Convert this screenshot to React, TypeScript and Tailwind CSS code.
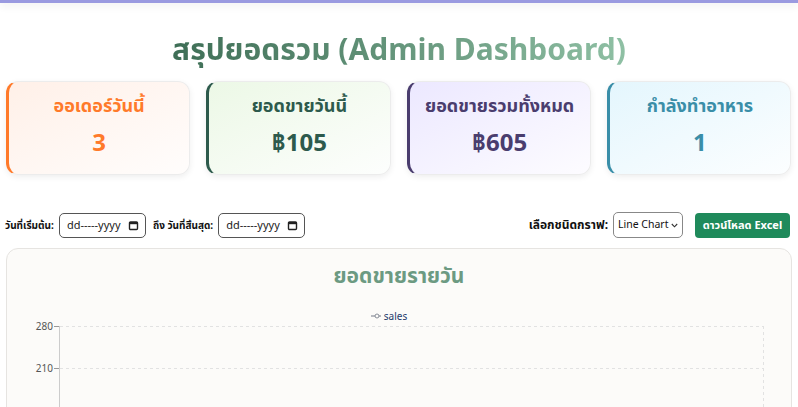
import React from 'react';

const cards = [
    { title: 'ออเดอร์วันนี้', value: '3', text: 'text-[#ff7a2a]', edge: 'border-l-[#ff7a2a]', bg: 'bg-gradient-to-br from-[#fff0e8] to-[#fffdfc]' },
    { title: 'ยอดขายวันนี้', value: '฿105', text: 'text-[#2d5a4c]', edge: 'border-l-[#2d5a4c]', bg: 'bg-gradient-to-br from-[#ecf8e6] to-[#fdfefd]' },
    { title: 'ยอดขายรวมทั้งหมด', value: '฿605', text: 'text-[#4a3d6e]', edge: 'border-l-[#4a3d6e]', bg: 'bg-gradient-to-br from-[#ece8ff] to-[#fdfcff]' },
    { title: 'กำลังทำอาหาร', value: '1', text: 'text-[#3a8ea8]', edge: 'border-l-[#3a8ea8]', bg: 'bg-gradient-to-br from-[#e4f6fd] to-[#fcfeff]' },
];

const DateBox = () => (
    <div className="flex items-center justify-between w-[87px] h-[25px] border border-[#555] rounded-[5px] pl-[7px] pr-[6px] bg-white">
        <span className="text-[11px] text-[#222] whitespace-nowrap">dd-----yyyy</span>
        <svg width="11" height="11" viewBox="0 0 11 11">
            <rect x="1.5" y="2" width="8" height="7.5" rx="1" fill="none" stroke="#222" strokeWidth="1.4" />
            <rect x="1.5" y="2" width="8" height="2.2" fill="#222" />
        </svg>
    </div>
);

const App = () => {
    return (
        <div className="w-[798px] h-[407px] overflow-hidden bg-white" style={{ fontFamily: '"Noto Sans", "Noto Sans Thai", "Liberation Sans", sans-serif' }}>
            {/* top bar */}
            <div className="h-[3px] bg-[#9a9ae0] shadow-[0_2px_8px_rgba(0,0,0,0.12)]" />

            <main className="px-[6px]">
                <h1 className="mt-[27px] text-center text-[30px] leading-[37px] font-bold">
                    <span className="bg-gradient-to-r from-[#3e6e56] to-[#8fc0a4] bg-clip-text text-transparent">
                        สรุปยอดรวม (Admin Dashboard)
                    </span>
                </h1>

                {/* summary cards */}
                <div className="mt-[14px] grid grid-cols-4 gap-[16px] pr-[1px]">
                    {cards.map((c) => (
                        <div
                            key={c.title}
                            className={`h-[94px] rounded-[12px] border border-[#ececec] border-l-[3px] ${c.edge} ${c.bg} shadow-[0_2px_6px_rgba(0,0,0,0.07)] flex flex-col items-center pt-[10px]`}
                        >
                            <div className={`text-[18px] leading-[26px] font-bold ${c.text}`}>{c.title}</div>
                            <div className={`mt-[9px] text-[24px] leading-[30px] font-bold ${c.text}`}>{c.value}</div>
                        </div>
                    ))}
                </div>

                {/* filters */}
                <div className="mt-[37px] flex items-center justify-between pr-[2px]">
                    <div className="flex items-center -ml-[1px]">
                        <span className="text-[10px] font-bold text-[#111] whitespace-nowrap">วันที่เริ่มต้น:</span>
                        <div className="ml-[5px]"><DateBox /></div>
                        <span className="ml-[7px] text-[10px] font-bold text-[#111] whitespace-nowrap">ถึง วันที่สิ้นสุด:</span>
                        <div className="ml-[5px]"><DateBox /></div>
                    </div>
                    <div className="flex items-center">
                        <span className="text-[12px] font-bold text-[#111] whitespace-nowrap">เลือกชนิดกราฟ:</span>
                        <div className="ml-[5px] flex items-center justify-between w-[70px] h-[26px] border border-[#888] rounded-[5px] pl-[4px] pr-[4px] bg-white">
                            <span className="text-[10.5px] text-[#111] whitespace-nowrap">Line Chart</span>
                            <svg width="7" height="5" viewBox="0 0 7 5" className="shrink-0">
                                <path d="M0.8 1 L3.5 3.8 L6.2 1" fill="none" stroke="#333" strokeWidth="1.1" />
                            </svg>
                        </div>
                        <button className="ml-[12px] h-[25px] w-[95px] rounded-[4px] bg-[#1f8a5b] text-white text-[11px] font-bold whitespace-nowrap">
                            ดาวน์โหลด Excel
                        </button>
                    </div>
                </div>

                {/* chart card */}
                <div className="mt-[10px] h-[200px] rounded-[12px] border border-[#e6e4e1] bg-[#fcfbf9] pt-[12px]">
                    <h2 className="text-center text-[21px] leading-[28px] font-bold text-[#6c9a82]">ยอดขายรายวัน</h2>
                    <div className="mt-[21px] flex items-center justify-center gap-[3px] pr-[20px]">
                        <svg width="10" height="6" viewBox="0 0 10 6">
                            <line x1="0" y1="3" x2="10" y2="3" stroke="#8a8f99" strokeWidth="1.2" />
                            <circle cx="6" cy="3" r="2" fill="#fcfbf9" stroke="#8a8f99" strokeWidth="1" />
                        </svg>
                        <span className="text-[10px] leading-[12px] text-[#1c3a6c]">sales</span>
                    </div>
                    <svg width="784" height="120" className="block overflow-visible">
                        <text x="46" y="8" textAnchor="end" fontSize="10" fill="#555">280</text>
                        <text x="46" y="50" textAnchor="end" fontSize="10" fill="#555">210</text>
                        <line x1="47" y1="4.5" x2="52" y2="4.5" stroke="#999" />
                        <line x1="47" y1="46.5" x2="52" y2="46.5" stroke="#999" />
                        <line x1="52.5" y1="4" x2="52.5" y2="120" stroke="#ccc" />
                        <line x1="53" y1="4.5" x2="757" y2="4.5" stroke="#e2e2e2" strokeDasharray="3 3" />
                        <line x1="53" y1="46.5" x2="757" y2="46.5" stroke="#e2e2e2" strokeDasharray="3 3" />
                        <line x1="756.5" y1="4" x2="756.5" y2="120" stroke="#e2e2e2" strokeDasharray="3 3" />
                    </svg>
                </div>
            </main>
        </div>
    );
};

export default App;
